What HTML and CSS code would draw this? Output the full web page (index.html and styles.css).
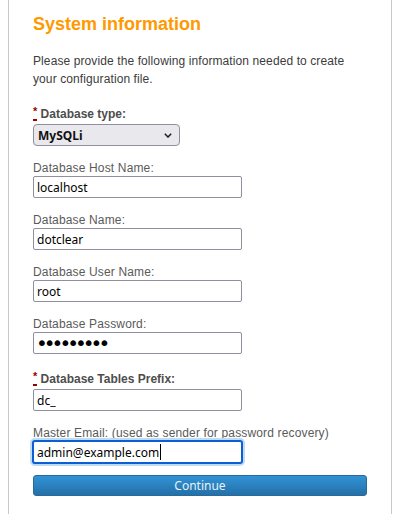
FILE: index.html
```html
<!DOCTYPE html>
<html lang="en">
  <head>
    <meta charset="UTF-8" />
    <meta name="viewport" content="width=device-width, initial-scale=1.0" />
    <title>Dotclear Install</title>
    <link rel="stylesheet" href="styles.css">
  </head>
  <body>
    <div class="container">
      <h2>System information</h2>
      <p class="intro">
        Please provide the following information needed to create your
        configuration file.
      </p>
      <form id="installForm">
        <div class="field">
          <label class="required" for="dbDriver"><abbr title="Required field">*</abbr> Database type:</label>
          <span class="select-wrap">
            <select id="dbDriver">
              <option value="mysqli">MySQLi</option>
              <option value="pgsql">PostgreSQL</option>
              <option value="sqlite">SQLite</option>
            </select>
            <svg class="chevron" width="8" height="5" viewBox="0 0 8 5">
              <path d="M0.8 0.8 L4 4 L7.2 0.8" fill="none" stroke="#1c1c1c" stroke-width="1.5" />
            </svg>
          </span>
        </div>

        <div class="field">
          <label for="dbHost">Database Host Name:</label>
          <input type="text" id="dbHost" value="localhost" />
        </div>

        <div class="field">
          <label for="dbName">Database Name:</label>
          <input type="text" id="dbName" value="dotclear" />
        </div>

        <div class="field">
          <label for="dbUser">Database User Name:</label>
          <input type="text" id="dbUser" value="root" />
        </div>

        <div class="field">
          <label for="dbPassword">Database Password:</label>
          <input type="password" id="dbPassword" class="password" value="dotclear1" />
        </div>

        <div class="field">
          <label class="required" for="dbPrefix"><abbr title="Required field">*</abbr> Database Tables Prefix:</label>
          <input type="text" id="dbPrefix" value="dc_" />
        </div>

        <div class="field">
          <label for="adminEmail">Master Email: (used as sender for password recovery)</label>
          <span class="caret-wrap">
            <input type="email" id="adminEmail" class="focused" value="admin@example.com" />
            <span class="caret"></span>
          </span>
        </div>

        <button type="submit">Continue</button>
      </form>
    </div>
  </body>
</html>
```

FILE: styles.css
```css
body {
  margin: 0;
  font-family: "Liberation Sans", Arial, sans-serif;
  font-size: 12px;
  color: #444;
  background: #fff;
}

.container {
  width: 384px;
  min-height: 100vh;
  box-sizing: border-box;
  margin-left: 8px;
  padding: 13px 24px 0;
  border-left: 1px solid #c8c8c8;
  border-right: 1px solid #c8c8c8;
}

h2 {
  margin: 0;
  font-size: 18px;
  line-height: 22px;
  color: #f90;
}

.intro {
  margin: 17px 0 15px;
  line-height: 18px;
  letter-spacing: 0.1px;
  color: #3c3c3c;
}

.field {
  margin-bottom: 14px;
}

label {
  display: block;
  line-height: 16px;
  letter-spacing: 0.15px;
  color: #5a5a5a;
}

label.required {
  padding: 3px 0 2px;
  font-weight: bold;
  letter-spacing: 0;
  color: #4d4d4d;
}

abbr {
  position: relative;
  top: -3px;
  font-size: 11px;
  color: #900;
  text-decoration: underline dotted #900 2px;
  text-underline-offset: 4px;
}

input,
select {
  display: block;
  box-sizing: border-box;
  height: 22px;
  margin: 0;
  font-family: "Noto Sans", sans-serif;
  font-size: 12px;
  color: #000;
}

input {
  width: 209px;
  padding: 0 3px;
  border: 1px solid #8f8f9d;
  border-radius: 2px;
  background: #fff;
}

input.password {
  padding-left: 2px;
  font-family: "DejaVu Sans", sans-serif;
  font-size: 20px;
  letter-spacing: -4px;
}

input.focused {
  border-color: #0a5fd5;
  box-shadow: 0 0 0 1px #0a5fd5, 0 0 0 3px #bfdcf5;
  outline: none;
}

.select-wrap,
.caret-wrap {
  position: relative;
  display: inline-block;
  vertical-align: top;
}

select {
  width: 147px;
  padding: 0 4px;
  appearance: none;
  border: 1px solid #8f8f9d;
  border-radius: 4px;
  background: #e9e9ed;
  font-weight: bold;
  color: #111;
}

.chevron {
  position: absolute;
  right: 8px;
  top: 9px;
  pointer-events: none;
}

.caret {
  position: absolute;
  left: 127px;
  top: 3px;
  width: 1px;
  height: 16px;
  background: #000;
}

button {
  display: block;
  width: 100%;
  height: 21px;
  margin-top: -2px;
  padding: 0;
  border: 1px solid #2a6a9b;
  border-radius: 3px;
  background: linear-gradient(#3193d6, #2470a8);
  color: #e8f1f8;
  font-family: "Noto Sans", sans-serif;
  font-size: 12px;
  cursor: pointer;
}
```
